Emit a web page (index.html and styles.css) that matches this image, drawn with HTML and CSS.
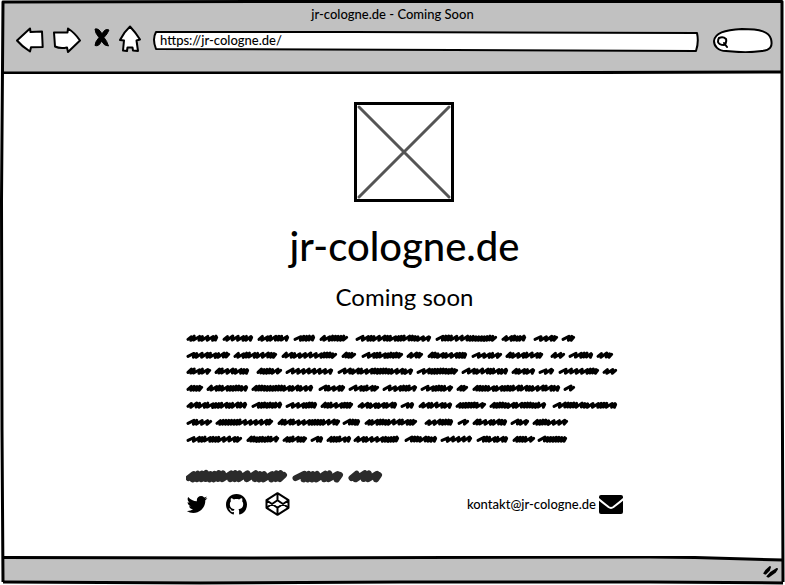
FILE: index.html
```html
<!DOCTYPE html>
<html lang="en">
<head>
<meta charset="utf-8">
<title>jr-cologne.de - Coming Soon</title>
<link rel="stylesheet" href="styles.css">
</head>
<body>
<div class="window">
  <header class="chrome">
    <svg class="sketch" viewBox="0 0 785 74" preserveAspectRatio="none" aria-hidden="true">
      <path class="fill" d="M3 2H783V73H3Z"/>
      <path class="line" d="M3 73L140 73L420 73L783 72"/>
    </svg>
    <div class="title">jr-cologne.de - Coming Soon</div>
    <div class="toolbar">
      <button class="tool" aria-label="Back"><svg width="28" height="28" viewBox="16 23 28 28"><path d="M17 37.500L30 25.500L30.500 29L42 28.500L42.700 44L31 44.300L30 48.500Q22 43.500 17 37.500Z"/></svg></button>
      <button class="tool" aria-label="Forward"><svg width="28" height="28" viewBox="52 23 28 28"><path d="M54 29.500L67.500 29.500L68 25.500Q75 30 80 37.500L68 49L67 44.500Q60 46 55 43.500Q54.500 36 54 29.500Z"/></svg></button>
      <button class="tool" aria-label="Stop"><svg width="24" height="28" viewBox="88 24 24 28"><path class="solid" d="M95 27Q99 26 102 32Q105 26 109 28Q107.500 32 104 35.500Q107 39 108.500 44Q104 44 101.500 39Q99 45 95 43.500Q95 40 99 35.500Q95 31 95 27Z"/></svg></button>
      <button class="tool" aria-label="Home"><svg width="24" height="28" viewBox="120 24 24 28"><path d="M130 24.500Q136 31 140 37.500L136.500 38.500L138 49L133 48.500L132.500 45.500L127.500 45.500L127 49L123 48.500L124 38.500L120 38Q124 30 130 24.500Z"/></svg></button>
      <div class="field address">
        <svg class="sketch" viewBox="0 0 546 24" preserveAspectRatio="none" aria-hidden="true"><path class="box" d="M4 4L200 4L544 5Q546 14 543 23L300 22L4 21Q0 11 4 4Z"/></svg>
        <input type="text" aria-label="Address" value="https://jr-cologne.de/">
      </div>
      <div class="field search">
        <svg class="sketch" viewBox="0 0 60 26" preserveAspectRatio="none" aria-hidden="true"><path class="box" d="M1 14C2 6 11 3 29 2C48 2 56 5 58 12C60 20 57 23 49 24C36 26 22 25 13 24C5 24 1 19 1 14Z"/></svg>
        <svg class="lens" width="14" height="14" viewBox="0 0 14 14" aria-hidden="true"><path d="M3 3Q7 1 10 4Q11 8 8 10Q3 10 2 7Q2 4 3 3M8 8L11 12"/></svg>
        <input type="search" aria-label="Search">
      </div>
    </div>
  </header>

  <main class="page">
    <div class="column">
      <svg class="placeholder" width="101" height="100" viewBox="0 0 101 100" aria-hidden="true"><path class="cross" d="M5 5L95 95M95 5L5 95"/><path class="frame" d="M1.500 1.500L45 1.500L98.500 1.500V98.500L1.500 98.500L1.500 1.500Z"/></svg>
      <h1>jr-cologne.de</h1>
      <h2>Coming soon</h2>
      <svg class="copy" height="118" width="437" viewBox="186 330 437 118" aria-hidden="true"></svg>
      <svg class="caption" height="16" width="437" viewBox="186 468 437 16" aria-hidden="true"></svg>
      <div class="contact">
        <nav class="social">
          <a href="#" aria-label="Twitter"><svg width="22" height="17" viewBox="50 256 1680 1280"><path d="M1684 408q-67 98-162 167 1 14 1 42 0 130-38 259.500t-115.500 248.500-184.500 210.500-258 146-323 54.500q-271 0-496-145 35 4 78 4 225 0 401-138-105-2-188-64.500t-114-159.500q33 5 61 5 43 0 85-11-112-23-185.500-111.500t-73.500-205.500v-4q68 38 146 41-66-44-105-115t-39-154q0-88 44-163 121 149 294.500 238.500t371.500 99.500q-8-38-8-74 0-134 94.500-228.500t228.500-94.500q140 0 236 102 109-21 205-78-37 115-142 178 93-10 186-50z"/></svg></a>
          <a href="#" aria-label="GitHub"><svg width="21" height="21" viewBox="0 0 16 16"><path d="M8 0C3.580 0 0 3.580 0 8c0 3.540 2.290 6.530 5.470 7.590.4.070.55-.17.55-.38 0-.19-.01-.82-.01-1.490-2.010.37-2.530-.49-2.690-.94-.09-.23-.48-.94-.82-1.130-.28-.15-.68-.52-.01-.53.63-.01 1.080.58 1.230.82.72 1.210 1.870.87 2.330.66.07-.52.28-.87.51-1.070-1.780-.2-3.640-.89-3.640-3.950 0-.87.31-1.590.82-2.150-.08-.2-.36-1.020.08-2.120 0 0 .67-.21 2.200.82.64-.18 1.320-.27 2-.27s1.360.09 2 .27c1.530-1.040 2.200-.82 2.200-.82.44 1.100.16 1.920.08 2.120.51.56.82 1.270.82 2.150 0 3.070-1.870 3.750-3.650 3.950.29.25.54.73.54 1.480 0 1.070-.01 1.930-.01 2.200 0 .21.15.46.55.38A8.010 8.010 0 0 0 16 8c0-4.420-3.580-8-8-8z"/></svg></a>
          <a href="#" aria-label="CodePen"><svg class="outline" width="25" height="24" viewBox="0 0 25 24"><path d="M12.500 1.200L23.500 8.200V15.800L12.500 22.800L1.500 15.800V8.200ZM12.500 1.200V8.200M12.500 15.800V22.800M1.500 8.200L12.500 15.800L23.500 8.200M1.500 15.800L12.500 8.200L23.500 15.800"/></svg></a>
        </nav>
        <a class="mail" href="mailto:kontakt@jr-cologne.de"><span>kontakt@jr-cologne.de</span><svg width="24" height="19" viewBox="0 0 24 19" aria-hidden="true"><rect width="24" height="19" rx="2"/><path class="flap" d="M-1 3.500C3 7 7 10 9.500 12Q12 13.800 14.500 12C17 10 21 7 25 3.500"/></svg></a>
      </div>
    </div>
  </main>

  <footer class="status">
    <svg class="sketch" viewBox="0 0 785 29" preserveAspectRatio="none" aria-hidden="true">
      <path class="fill" d="M3 2L700 2L783 4V27L3 27Z"/>
      <path class="line" d="M3 1.500L250 2L650 1L695 1.500L783 4M3 26L200 27L400 26L650 26L783 27"/>
    </svg>
    <svg class="grip" width="18" height="16" viewBox="0 0 18 16" aria-hidden="true"><path d="M2 11Q4 7 8 4L7 7L3 11M5 14Q9 9 15 6L13 9L6 14"/></svg>
  </footer>
  <svg class="sketch edges" viewBox="0 0 785 585" preserveAspectRatio="none" aria-hidden="true"><path class="line" d="M3 582L2 430L1.500 200L3 2L300 1.500L782 1.500L782 300L783 582"/></svg>
</div>
<script src="scribble.js"></script>
</body>
</html>
```
FILE: styles.css
```css
* { box-sizing: border-box; }
body {
  margin: 0;
  background: #fff;
  color: #000;
  font-family: Lato, "Open Sans", sans-serif;
  font-size: 13px;
  font-weight: 500;
}
.window {
  position: relative;
  display: flex;
  flex-direction: column;
  min-height: 100vh;
}
.sketch {
  position: absolute;
  inset: 0;
  width: 100%;
  height: 100%;
  pointer-events: none;
}
.sketch .fill { fill: #c1c1c1; }
.sketch .line, .sketch .box {
  fill: none;
  stroke: #000;
  stroke-width: 3px;
  stroke-linejoin: round;
  vector-effect: non-scaling-stroke;
}
.sketch .box { fill: #fff; stroke-width: 2px; }
.chrome {
  position: relative;
  height: 74px;
  padding: 6px 12px 0 16px;
}
.title {
  position: relative;
  line-height: 16px;
  text-align: center;
}
.chrome .title { padding-right: 4px; }
.toolbar {
  position: relative;
  display: flex;
  align-items: center;
  gap: 8px;
  height: 36px;
}
.tool {
  display: block;
  padding: 0;
  border: 0;
  background: none;
}
.tool svg {
  display: block;
  overflow: visible;
  fill: #fff;
  stroke: #000;
  stroke-width: 2;
  stroke-linejoin: round;
}
.tool .solid { fill: #000; stroke-width: 1; }
.field { position: relative; }
.field input {
  position: relative;
  display: block;
  width: 100%;
  height: 24px;
  padding: 0 8px;
  border: 0;
  outline: 0;
  background: none;
  color: #000;
  font: inherit;
}
.address { flex: 1; }
.search { flex: 0 0 60px; margin-left: 6px; }
.search input { padding-left: 18px; appearance: none; height: 26px; }
.lens {
  position: absolute;
  top: 8px;
  left: 3px;
  fill: none;
  stroke: #000;
  stroke-width: 2;
  stroke-linecap: round;
}
.page {
  flex: 1;
  display: flex;
  justify-content: center;
  padding: 28px 0 0 24px;
}
.column {
  display: flex;
  flex-direction: column;
  align-items: center;
  width: 437px;
}
.placeholder .frame { fill: none; stroke: #000; stroke-width: 3; }
.placeholder .cross { stroke: #555; stroke-width: 3; stroke-linecap: round; }
h1 {
  margin: 20px 0 0;
  font-size: 40px;
  font-weight: 500;
  line-height: 48px;
}
h2 {
  margin: 11px 0 0;
  font-size: 24px;
  font-weight: 400;
  line-height: 32px;
}
.copy, .caption {
  display: block;
  max-width: 100%;
  fill: none;
  stroke: #000;
  stroke-width: 3;
  stroke-linejoin: round;
  stroke-linecap: round;
}
.copy { margin-top: 17px; }
.caption { margin-top: 20px; stroke: #2b2b2b; stroke-width: 6; }
.contact {
  display: flex;
  align-items: center;
  justify-content: space-between;
  width: 100%;
  height: 24px;
  margin-top: 8px;
}
.contact a { color: #000; text-decoration: none; }
.contact svg { display: block; }
.social { display: flex; align-items: center; gap: 18px; }
.outline { fill: none; stroke: #000; stroke-width: 2; stroke-linejoin: round; }
.mail { display: flex; align-items: center; gap: 3px; }
.flap { fill: none; stroke: #fff; stroke-width: 2; }
.status {
  position: relative;
  display: flex;
  align-items: center;
  justify-content: flex-end;
  height: 29px;
  padding-right: 5px;
}
.grip { position: relative; fill: #000; stroke: #000; stroke-width: 2; stroke-linejoin: round; }
```
FILE: scribble.js
```js
// Start and end of every scribbled word, line by line.
const copy = [
  [338, [187,218, 223,253, 258,289, 294,315, 320,348, 356,431, 436,497, 502,526, 534,558, 562,575]],
  [355, [187,230, 234,277, 282,337, 342,356, 362,403, 407,423, 428,467, 472,502, 506,543, 551,565, 569,593, 597,613]],
  [371, [187,211, 215,249, 257,282, 286,333, 338,413, 417,458, 462,508, 512,535, 539,554, 559,599, 603,617]],
  [388, [187,203, 207,248, 252,313, 319,345, 349,379, 383,417, 421,453, 457,468, 473,560, 564,575]],
  [405, [187,247, 252,282, 286,317, 321,353, 358,397, 401,414, 419,452, 456,486, 490,546, 553,617]],
  [422, [187,212, 216,273, 278,340, 343,360, 365,417, 425,453, 458,469, 473,507, 511,529, 533,568]],
  [439, [187,242, 247,279, 283,307, 311,323, 327,351, 354,399, 405,437, 441,472, 477,508, 513,535, 538,567]]
];
const caption = [[476, [187,286, 294,342, 350,381]]];

let seed = 7;
function random() {
  seed = (seed * 16807) % 2147483647;
  return seed / 2147483647;
}

// A word is one pen line of slanted strokes, some tight and some drawn out.
function word(x0, x1, y, size) {
  const end = x1 - size;
  let x = x0 + size / 2;
  let d = `M${x} ${y + size * 0.7}`;
  while (x < end - size * 1.5) {
    const wide = random() > 0.65;
    const drop = random() * size * 0.4;
    const top = Math.min(x + size * (wide ? 3 : 1.7), end);
    d += `L${top} ${y - size + drop}`;
    x = Math.min(top - size * 0.3, end);
    d += `L${x} ${y + size + drop / 2}`;
  }
  return d + `L${end + size / 3} ${y - size / 3}`;
}

function scribble(selector, lines, size) {
  const svg = document.querySelector(selector);
  for (const [y, spans] of lines) {
    for (let i = 0; i < spans.length; i += 2) {
      const path = document.createElementNS("http://www.w3.org/2000/svg", "path");
      path.setAttribute("d", word(spans[i], spans[i + 1], y, size));
      svg.append(path);
    }
  }
}

scribble(".copy", copy, 2);
scribble(".caption", caption, 3);
```
